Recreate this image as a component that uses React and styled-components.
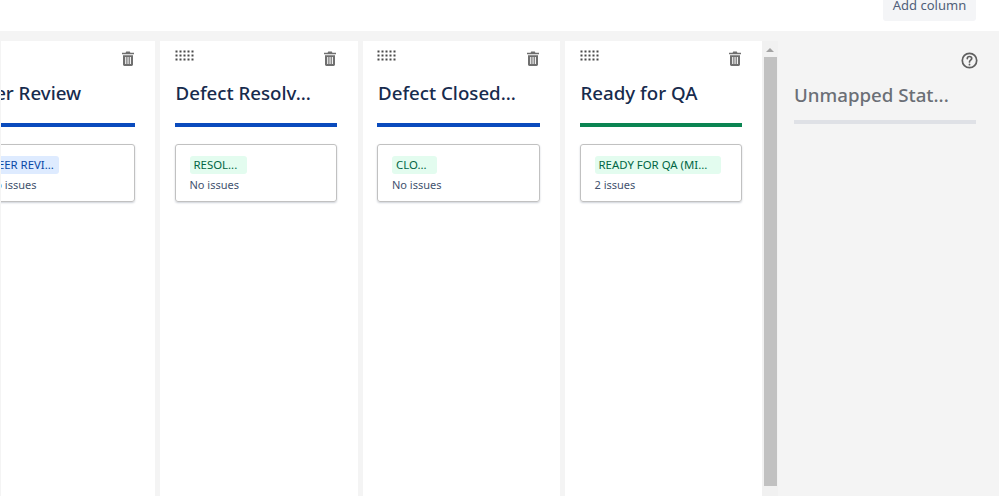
import React from 'react';
import styled, { createGlobalStyle } from 'styled-components';

const Global = createGlobalStyle`
  html, body { margin: 0; padding: 0; height: 100%; overflow: hidden; background: #fff; }
  body { font-family: "Noto Sans", "Open Sans", sans-serif; }
`;

const Page = styled.div`
  width: 999px;
  height: 496px;
  display: flex;
  flex-direction: column;
  overflow: hidden;
`;

const TopBar = styled.div`
  height: 31px;
  flex: none;
  display: flex;
  justify-content: flex-end;
  align-items: flex-end;
  padding: 0 23px 10px 0;
  box-sizing: border-box;
`;

const AddColumn = styled.button`
  width: 93px;
  height: 30px;
  flex: none;
  border: 0;
  border-radius: 3px;
  background: #f4f5f7;
  color: #505f79;
  font: 13px "Noto Sans", sans-serif;
  display: flex;
  align-items: flex-end;
  justify-content: center;
  line-height: 18px;
  padding: 0 0 7px;
  box-sizing: border-box;
`;

const Board = styled.div`
  flex: 1;
  min-height: 0;
  display: flex;
  background: #f4f4f4;
  padding-top: 10px;
`;

const Scroller = styled.div`
  width: 761px;
  flex: none;
  margin-left: 1px;
  overflow: hidden;
`;

const Columns = styled.div`
  display: flex;
  gap: 5px;
  height: 100%;
  margin-left: -43.5px;
`;

const Column = styled.section`
  width: 197.5px;
  flex: none;
  background: #fff;
  padding: 0 20.5px 0 14.5px;
  box-sizing: border-box;
`;

const ColumnTop = styled.div`
  height: 27px;
  display: flex;
  justify-content: space-between;
  align-items: flex-start;
`;

const Grip = styled.svg`
  width: 19px;
  height: 11px;
  margin-top: 9px;
  fill: #4a4a4a;
  visibility: ${p => (p.$hidden ? 'hidden' : 'visible')};
`;

const Trash = styled.svg`
  width: 12px;
  height: 15px;
  margin-top: 10px;
  margin-right: 1px;
  fill: #6f6f6f;
`;

const Title = styled.h2`
  margin: 0;
  padding-left: 1px;
  height: 50px;
  font-size: 18.7px;
  font-weight: 500;
  line-height: 50px;
  color: #172b4d;
  white-space: nowrap;
`;

const Rule = styled.div`
  height: 4px;
  margin-top: 5px;
  background: ${p => p.$color};
`;

const StatusCard = styled.div`
  height: 58px;
  margin-top: 17px;
  box-sizing: border-box;
  border: 1px solid #c1c1c1;
  border-radius: 3px;
  box-shadow: 0 1px 2px rgba(9, 30, 66, 0.2);
  padding: 11px 14px;
`;

const Lozenge = styled.span`
  display: block;
  width: ${p => p.$width}px;
  height: 18px;
  box-sizing: border-box;
  border-radius: 3px;
  padding-left: 4px;
  background: ${p => (p.$kind === 'blue' ? '#deebff' : '#e3fcef')};
  color: ${p => (p.$kind === 'blue' ? '#0747a6' : '#006644')};
  font-size: 11.4px;
  line-height: 18px;
  white-space: nowrap;
  overflow: hidden;
`;

const Count = styled.div`
  font-size: 11px;
  line-height: 20px;
  margin-top: 1px;
  color: #42526e;
`;

const ScrollTrack = styled.div`
  width: 16px;
  flex: none;
  background: #f1f1f1;
  display: flex;
  flex-direction: column;
  align-items: center;
`;

const ScrollArrow = styled.div`
  width: 0;
  height: 0;
  margin-top: 7px;
  border-left: 4px solid transparent;
  border-right: 4px solid transparent;
  border-bottom: 4px solid #a3a3a3;
`;

const ScrollThumb = styled.div`
  width: 13px;
  height: 429px;
  margin-top: 5px;
  background: #c1c1c1;
`;

const Unmapped = styled.aside`
  flex: 1;
  min-width: 0;
  padding: 0 23px 0 16px;
`;

const Help = styled.svg`
  display: block;
  width: 17px;
  height: 17px;
  margin: 11px -1.5px 0 auto;
  fill: none;
  stroke: #5f5f5f;
  stroke-width: 1.7;
  stroke-linecap: round;
`;

const UnmappedTitle = styled(Title)`
  height: 40px;
  margin-top: 6px;
  padding-left: 0;
  line-height: 40px;
  color: #6b6f76;
`;

const UnmappedRule = styled.div`
  height: 4px;
  margin-top: 5px;
  background: #dfe1e6;
`;

const GripIcon = ({ hidden }) => (
  <Grip $hidden={hidden} viewBox="0 0 19 11">
    {[0.5, 4.5, 8.5].map(y =>
      [0.5, 4.5, 8.5, 12.5, 16.5].map(x => <rect key={`${x}-${y}`} x={x} y={y} width="2" height="2" />)
    )}
  </Grip>
);

const TrashIcon = () => (
  <Trash viewBox="0 0 12 15">
    <path d="M4.2 0.5h3.6l0.6 1.2H12v1.6H0V1.7h3.6z" />
    <path fillRule="evenodd" d="M1 4.3h10v9.2c0 .8-.6 1.4-1.4 1.4H2.4c-.8 0-1.4-.6-1.4-1.4zM3.2 6v7h1.1V6zM5.5 6v7h1.1V6zM7.8 6v7h1.1V6z" />
  </Trash>
);

const columns = [
  { title: 'Peer Review', color: '#0a4bbd', status: 'PEER REVI...', kind: 'blue', width: 72, count: 'No issues', hideGrip: true },
  { title: 'Defect Resolv...', color: '#0a4bbd', status: 'RESOL...', kind: 'green', width: 57, count: 'No issues' },
  { title: 'Defect Closed...', color: '#0a4bbd', status: 'CLO...', kind: 'green', width: 45, count: 'No issues' },
  { title: 'Ready for QA', color: '#0b8552', status: 'READY FOR QA (MI...', kind: 'green', width: 126, count: '2 issues' },
];

export default function App() {
  return (
    <Page>
      <Global />
      <TopBar>
        <AddColumn>Add column</AddColumn>
      </TopBar>
      <Board>
        <Scroller>
          <Columns>
            {columns.map(col => (
              <Column key={col.title}>
                <ColumnTop>
                  <GripIcon hidden={col.hideGrip} />
                  <TrashIcon />
                </ColumnTop>
                <Title>{col.title}</Title>
                <Rule $color={col.color} />
                <StatusCard>
                  <Lozenge $kind={col.kind} $width={col.width}>{col.status}</Lozenge>
                  <Count>{col.count}</Count>
                </StatusCard>
              </Column>
            ))}
          </Columns>
        </Scroller>
        <ScrollTrack>
          <ScrollArrow />
          <ScrollThumb />
        </ScrollTrack>
        <Unmapped>
          <Help viewBox="0 0 17 17">
            <circle cx="8.5" cy="8.5" r="7.2" />
            <path d="M6.3 6.6c0-1.3 1-2.1 2.2-2.1s2.2.8 2.2 2c0 1.7-2.2 1.7-2.2 3.4" />
            <path d="M8.5 12.3v.4" />
          </Help>
          <UnmappedTitle>Unmapped Stat...</UnmappedTitle>
          <UnmappedRule />
        </Unmapped>
      </Board>
    </Page>
  );
}
